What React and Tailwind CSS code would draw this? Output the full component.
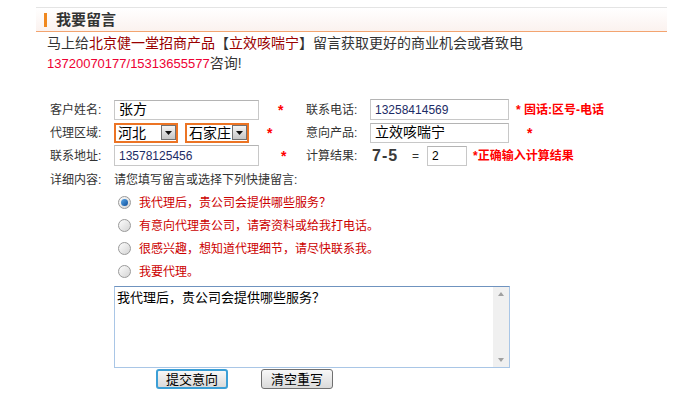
import React from "react";

const Star = ({ className = "" }) => (
  <span className={`text-[14px] font-bold text-[#ff0000] leading-none ${className}`}>*</span>
);

function Field({ width, height = 20, children, className = "" }) {
  return (
    <div
      className={`flex items-center border border-[#c8c8c8] border-t-[#b4b4b4] bg-white pl-[4px] ${width} ${className}`}
      style={{ height }}
    >
      {children}
    </div>
  );
}

function Select({ value }) {
  return (
    <div className="flex items-center justify-between w-[64px] h-[20px] border-2 border-[#ec7424] bg-white pl-[2px] whitespace-nowrap">
      <span className="text-[14px] text-black leading-none">{value}</span>
      <div className="shrink-0 flex items-center justify-center w-[15px] h-[15px] border border-[#707070] bg-gradient-to-b from-[#f4f4f4] to-[#c6c6c6]">
        <svg width="7" height="4" viewBox="0 0 7 4">
          <path d="M0 0h7L3.5 4z" fill="#111" />
        </svg>
      </div>
    </div>
  );
}

function Radio({ checked, label }) {
  return (
    <div className="flex items-center h-[23px] ml-[68px]">
      <span className="flex items-center justify-center w-[13px] h-[13px] rounded-full border border-[#9a9a9a] bg-gradient-to-br from-[#fdfdfd] to-[#d4d4d4]">
        {checked && (
          <span className="w-[7px] h-[7px] rounded-full bg-gradient-to-br from-[#5aa8e8] to-[#0b4f9c]" />
        )}
      </span>
      <span className="ml-[8px] text-[12px] text-[#cc0000]">{label}</span>
    </div>
  );
}

export default function App() {
  return (
    <div className="w-[675px] h-[398px] overflow-hidden bg-white text-[#333] font-['Liberation_Sans','Noto_Sans_CJK_SC',sans-serif]">
      {/* header */}
      <div className="ml-[36px] mt-[7px] w-[631px] h-[25px] flex items-center border-t border-[#e4e4e4] border-b border-b-[#f3a470] bg-gradient-to-b from-white to-[#fbf2ef]">
        <span className="ml-[8px] w-[3px] h-[14px] bg-[#f0881e]" />
        <span className="ml-[9px] text-[15px] font-bold text-[#333] leading-none">我要留言</span>
      </div>

      {/* intro */}
      <div className="ml-[47px] mt-[1px]">
        <p className="h-[20px] leading-[20px] text-[14px] text-[#333]">
          马上给<span className="text-[#990000]">北京健一堂招商产品</span>【
          <span className="text-[#990000]">立效咳喘宁</span>】留言获取更好的商业机会或者致电
        </p>
        <p className="h-[20px] leading-[20px] text-[14px] text-[#333]">
          <span className="text-[13px] text-[#ee0033]">13720070177/15313655577</span>咨询!
        </p>
      </div>

      {/* form */}
      <div className="ml-[50px] mt-[25px] text-[12px]">
        <div className="flex items-center h-[23px] whitespace-nowrap">
          <span className="w-[64px]">客户姓名:</span>
          <div className="flex items-center w-[192px]">
            <Field width="w-[145px]">
              <span className="text-[14px] text-black">张方</span>
            </Field>
            <Star className="ml-[19px]" />
          </div>
          <span className="w-[64px]">联系电话:</span>
          <Field width="w-[139px]" height={21}>
            <span className="text-[12px] text-[#1c2c66]">13258414569</span>
          </Field>
          <span className="ml-[7px] text-[12px] font-bold text-[#ff0000]">* 固话:区号-电话</span>
        </div>

        <div className="flex items-center h-[23px] whitespace-nowrap">
          <span className="w-[64px]">代理区域:</span>
          <div className="flex items-center w-[192px]">
            <Select value="河北" />
            <div className="ml-[7px]">
              <Select value="石家庄" />
            </div>
            <Star className="ml-[18px]" />
          </div>
          <span className="w-[64px]">意向产品:</span>
          <Field width="w-[139px]">
            <span className="text-[14px] text-black">立效咳喘宁</span>
          </Field>
          <Star className="ml-[18px]" />
        </div>

        <div className="flex items-center h-[23px] whitespace-nowrap">
          <span className="w-[64px]">联系地址:</span>
          <div className="flex items-center w-[192px]">
            <Field width="w-[145px]" height={21}>
              <span className="text-[12px] text-[#1c2c66]">13578125456</span>
            </Field>
            <Star className="ml-[22px]" />
          </div>
          <span className="w-[64px]">计算结果:</span>
          <span className="ml-[2px] w-[32px] text-[16px] font-bold text-[#3a3a3a] tracking-[1px] leading-none">7-5</span>
          <span className="ml-[8px] text-[12px]">=</span>
          <Field width="w-[40px] ml-[8px]">
            <span className="text-[12px] text-black">2</span>
          </Field>
          <span className="ml-[6px] text-[12px] font-bold text-[#ff0000]">*正确输入计算结果</span>
        </div>

        <div className="flex items-center h-[22px] mt-[2px]">
          <span className="w-[64px]">详细内容:</span>
          <span>请您填写留言或选择下列快捷留言:</span>
        </div>

        <Radio checked label="我代理后，贵公司会提供哪些服务？" />
        <Radio label="有意向代理贵公司，请寄资料或给我打电话。" />
        <Radio label="很感兴趣，想知道代理细节，请尽快联系我。" />
        <Radio label="我要代理。" />

        {/* textarea */}
        <div className="ml-[64px] mt-[3px] w-[396px] h-[82px] flex border border-[#a9c6e6] border-t-[#6f93bf] bg-white">
          <div className="flex-1 pl-[2px] pt-[3px] text-[13px] text-black leading-[16px]">
            我代理后，贵公司会提供哪些服务？
          </div>
          <div className="w-[16px] h-full bg-[#f0f0f0] flex flex-col items-center justify-between py-[5px]">
            <svg width="6" height="4" viewBox="0 0 6 4">
              <path d="M0 4L3 0L6 4z" fill="#a0a0a0" />
            </svg>
            <svg width="6" height="4" viewBox="0 0 6 4">
              <path d="M0 0h6L3 4z" fill="#a0a0a0" />
            </svg>
          </div>
        </div>

        {/* buttons */}
        <div className="flex mt-[1px]">
          <button className="ml-[106px] w-[72px] h-[20px] rounded-[3px] border-2 border-[#3c9fd6] bg-gradient-to-b from-[#f8f8f8] to-[#dadada] text-[13px] text-black leading-none">
            提交意向
          </button>
          <button className="ml-[33px] w-[72px] h-[20px] rounded-[3px] border border-[#707070] bg-gradient-to-b from-[#f8f8f8] to-[#dadada] text-[13px] text-black leading-none">
            清空重写
          </button>
        </div>
      </div>
    </div>
  );
}
